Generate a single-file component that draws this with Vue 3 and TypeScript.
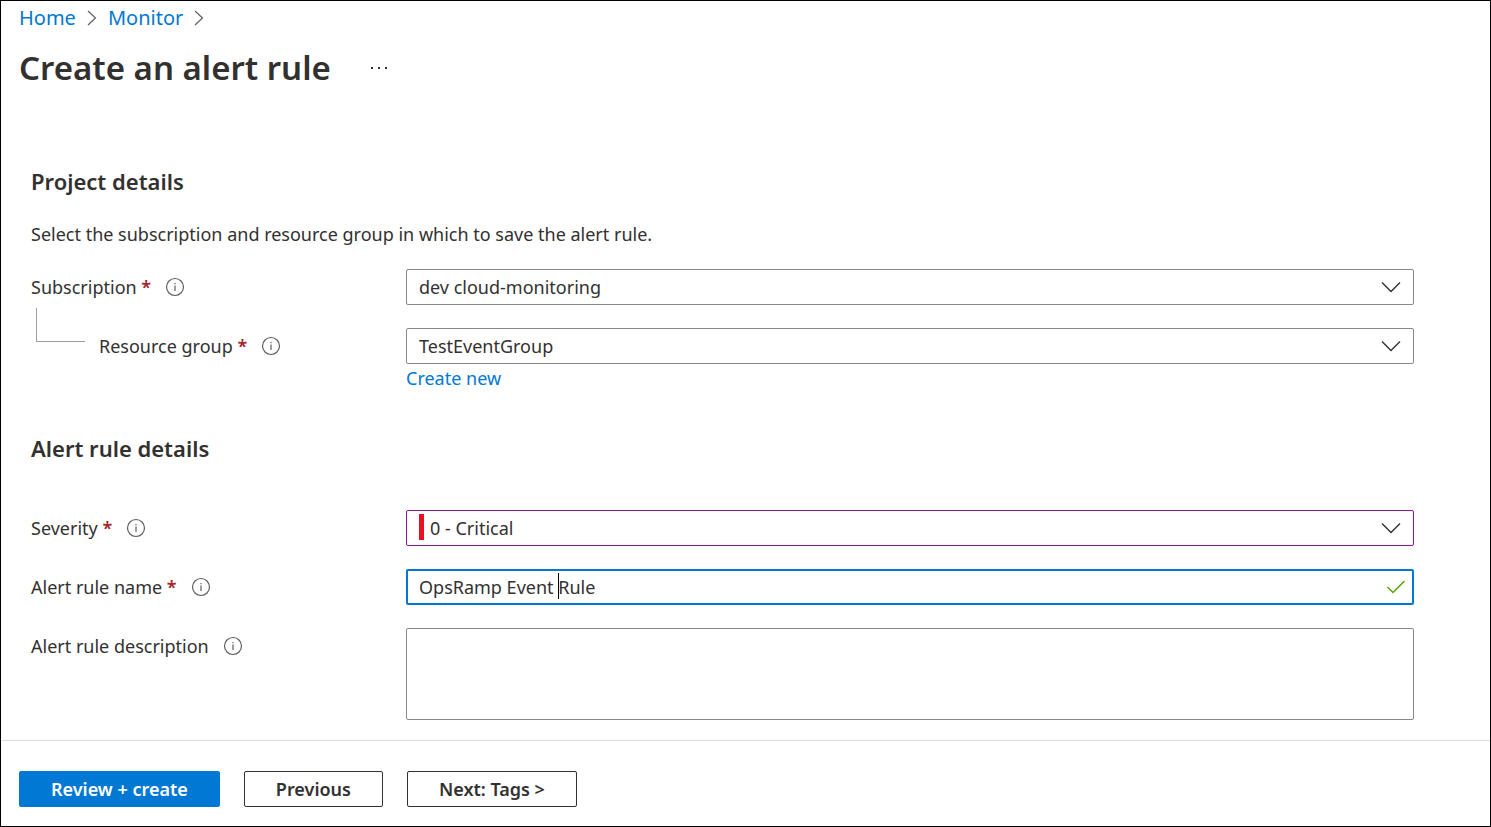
<script setup lang="ts">
import { computed, onMounted, ref } from 'vue'

const subscription = ref('dev cloud-monitoring')
const resourceGroup = ref('TestEventGroup')
const severity = ref('0 - Critical')
const ruleName = ref('OpsRamp Event Rule')
const description = ref('')

const caretIndex = ref(14)
const nameInput = ref<HTMLInputElement | null>(null)
const caretOffset = ref(0)
const caretStyle = computed(() => ({ left: `${caretOffset.value}px` }))

function placeCaret(): void {
  const input = nameInput.value
  const context = document.createElement('canvas').getContext('2d')
  if (!input || !context) return
  const style = getComputedStyle(input)
  caretIndex.value = Math.min(input.selectionStart ?? caretIndex.value, ruleName.value.length)
  context.font = `${style.fontSize} ${style.fontFamily}`
  const width = context.measureText(ruleName.value.slice(0, caretIndex.value)).width
  caretOffset.value = Math.round(width + parseFloat(style.paddingLeft) + parseFloat(style.borderLeftWidth))
}

onMounted(() => {
  nameInput.value?.setSelectionRange(caretIndex.value, caretIndex.value)
  placeCaret()
})
</script>

<template>
  <div class="page">
    <header class="header">
      <nav class="breadcrumb" aria-label="Breadcrumb">
        <a href="#home">Home</a>
        <svg class="crumb-arrow" viewBox="0 0 10 16" aria-hidden="true"><path d="M1 1l7.5 7L1 15" /></svg>
        <a href="#monitor">Monitor</a>
        <svg class="crumb-arrow" viewBox="0 0 10 16" aria-hidden="true"><path d="M1 1l7.5 7L1 15" /></svg>
      </nav>
      <div class="title-row">
        <h1>Create an alert rule</h1>
        <button class="more" type="button" aria-label="More actions">
          <svg viewBox="0 0 18 4" aria-hidden="true">
            <path d="M1 1h2v2H1zM8 1h2v2H8zM15 1h2v2h-2z" />
          </svg>
        </button>
      </div>
    </header>

    <form id="rule-form" class="content" @submit.prevent>
      <h2>Project details</h2>
      <p class="intro">Select the subscription and resource group in which to save the alert rule.</p>

      <div class="fields project">
        <div class="row">
          <div class="caption">
            <label for="subscription">Subscription <span class="required">*</span></label>
            <svg class="info" viewBox="0 0 20 20" aria-hidden="true"><circle cx="10" cy="10" r="8.5" /><path d="M10 8.5v5.5M10 6v1.3" /></svg>
          </div>
          <div class="control">
            <select id="subscription" v-model="subscription" class="box">
              <option>dev cloud-monitoring</option>
            </select>
            <svg class="chevron" viewBox="0 0 20 12" aria-hidden="true"><path d="M1 1.5l9 9 9-9" /></svg>
          </div>
        </div>

        <div class="row">
          <div class="caption nested">
            <span class="branch"></span>
            <label for="resource-group">Resource group <span class="required">*</span></label>
            <svg class="info" viewBox="0 0 20 20" aria-hidden="true"><circle cx="10" cy="10" r="8.5" /><path d="M10 8.5v5.5M10 6v1.3" /></svg>
          </div>
          <div>
            <div class="control">
              <select id="resource-group" v-model="resourceGroup" class="box">
                <option>TestEventGroup</option>
              </select>
              <svg class="chevron" viewBox="0 0 20 12" aria-hidden="true"><path d="M1 1.5l9 9 9-9" /></svg>
            </div>
            <a class="create" href="#create">Create new</a>
          </div>
        </div>
      </div>

      <h2>Alert rule details</h2>

      <div class="fields details">
        <div class="row">
          <div class="caption">
            <label for="severity">Severity <span class="required">*</span></label>
            <svg class="info" viewBox="0 0 20 20" aria-hidden="true"><circle cx="10" cy="10" r="8.5" /><path d="M10 8.5v5.5M10 6v1.3" /></svg>
          </div>
          <div class="control">
            <select id="severity" v-model="severity" class="box changed">
              <option>0 - Critical</option>
            </select>
            <span class="severity-bar"></span>
            <svg class="chevron" viewBox="0 0 20 12" aria-hidden="true"><path d="M1 1.5l9 9 9-9" /></svg>
          </div>
        </div>

        <div class="row">
          <div class="caption">
            <label for="rule-name">Alert rule name <span class="required">*</span></label>
            <svg class="info" viewBox="0 0 20 20" aria-hidden="true"><circle cx="10" cy="10" r="8.5" /><path d="M10 8.5v5.5M10 6v1.3" /></svg>
          </div>
          <div class="control">
            <input
              id="rule-name"
              ref="nameInput"
              v-model="ruleName"
              class="box active"
              type="text"
              @keyup="placeCaret"
              @click="placeCaret"
            />
            <span class="caret" :style="caretStyle"></span>
            <svg class="check" viewBox="0 0 20 14" aria-hidden="true"><path d="M1.500 7l5.500 5.500L18.500 1" /></svg>
          </div>
        </div>

        <div class="row">
          <div class="caption">
            <label for="rule-description">Alert rule description</label>
            <svg class="info" viewBox="0 0 20 20" aria-hidden="true"><circle cx="10" cy="10" r="8.5" /><path d="M10 8.5v5.5M10 6v1.3" /></svg>
          </div>
          <div class="control">
            <textarea id="rule-description" v-model="description" class="box area"></textarea>
          </div>
        </div>
      </div>
    </form>

    <footer class="footer">
      <button class="button primary" type="submit" form="rule-form">Review + create</button>
      <button class="button" type="button">Previous</button>
      <button class="button" type="button">Next: Tags &gt;</button>
    </footer>
  </div>
</template>

<style>
body {
  margin: 0;
  background: #fff;
}
</style>

<style scoped>
.page {
  box-sizing: border-box;
  min-height: 100vh;
  display: flex;
  flex-direction: column;
  border: 1px solid #000;
  color: #323130;
  font-family: "Noto Sans", "Open Sans", sans-serif;
  font-size: 18px;
  line-height: 24px;
}

a {
  color: #0078d4;
  text-decoration: none;
}

.header {
  padding: 5px 18px 0;
}

.breadcrumb {
  display: flex;
  align-items: center;
  gap: 11px;
  font-size: 20px;
}

.crumb-arrow {
  width: 10px;
  height: 16px;
  fill: none;
  stroke: #605e5c;
  stroke-width: 1.2;
}

.title-row {
  display: flex;
  align-items: center;
  gap: 39px;
  margin-top: 13px;
}

h1 {
  margin: 0;
  font-size: 33px;
  font-weight: 600;
  line-height: 50px;
}

.more {
  display: flex;
  padding: 0;
  border: 0;
  background: none;
}

.more svg {
  width: 18px;
  height: 4px;
  fill: #323130;
}

.content {
  flex: 1;
  padding: 72px 76px 20px 30px;
}

h2 {
  margin: 0;
  font-size: 22px;
  font-weight: 600;
  line-height: 32px;
}

.intro {
  margin: 25px 0 0;
}

.fields {
  display: grid;
  gap: 23px;
}

.project {
  margin: 23px 0 42px;
}

.details {
  margin-top: 46px;
}

.row {
  display: grid;
  grid-template-columns: 375px minmax(0, 1fr);
  align-items: start;
}

.caption {
  display: flex;
  align-items: center;
  height: 36px;
  gap: 14px;
}

.nested {
  position: relative;
  padding-left: 68px;
}

.branch {
  position: absolute;
  left: 5px;
  bottom: 22px;
  width: 48px;
  height: 33px;
  border: solid #a19f9d;
  border-width: 0 0 1px 1px;
}

.required {
  color: #a4262c;
  font-weight: 600;
}

.info {
  width: 20px;
  height: 20px;
  fill: none;
  stroke: #605e5c;
  stroke-width: 1.2;
}

.control {
  position: relative;
  display: flex;
}

.box {
  box-sizing: border-box;
  width: 100%;
  height: 36px;
  margin: 0;
  padding: 0 12px;
  border: 1px solid #8a8886;
  border-radius: 2px;
  outline: none;
  appearance: none;
  background: #fff;
  color: #323130;
  font: inherit;
}

.changed {
  padding-left: 23px;
  border-color: #881798;
}

.active {
  padding: 0 11px;
  border: 2px solid #0078d4;
  caret-color: transparent;
}

.area {
  height: 92px;
  padding: 6px 12px;
  resize: none;
}

.chevron {
  position: absolute;
  top: 12px;
  right: 13px;
  width: 20px;
  height: 12px;
  fill: none;
  stroke: #323130;
  stroke-width: 1.4;
  pointer-events: none;
}

.severity-bar {
  position: absolute;
  top: 4px;
  left: 13px;
  width: 5px;
  height: 26px;
  background: #e81123;
  pointer-events: none;
}

.caret {
  position: absolute;
  top: 4px;
  width: 1px;
  height: 26px;
  background: #000;
  pointer-events: none;
}

.check {
  position: absolute;
  top: 11px;
  right: 8px;
  width: 20px;
  height: 14px;
  fill: none;
  stroke: #57a300;
  stroke-width: 1.5;
}

.create {
  display: block;
  width: max-content;
  margin-top: 2px;
}

.footer {
  display: flex;
  flex-wrap: wrap;
  gap: 24px;
  padding: 30px 18px 19px;
  border-top: 1px solid #dcdcdc;
}

.button {
  box-sizing: border-box;
  height: 36px;
  padding: 0 31px;
  border: 1px solid #323130;
  border-radius: 2px;
  background: #fff;
  color: #323130;
  font: inherit;
  font-weight: 600;
}

.primary {
  border-color: #0078d4;
  background: #0078d4;
  color: #fff;
}
</style>
